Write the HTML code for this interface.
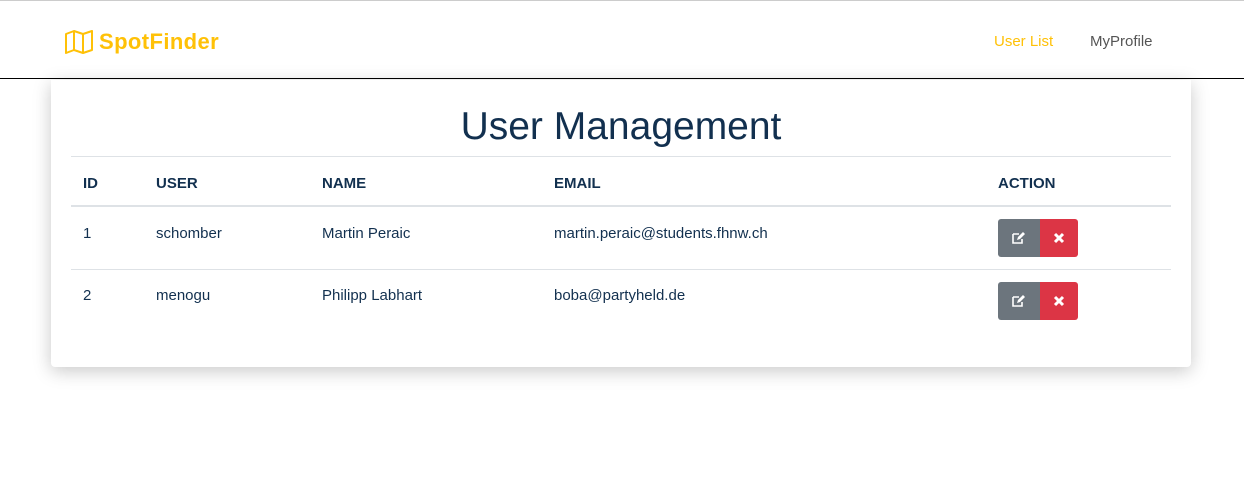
<!DOCTYPE html>
<html><head><style>
body{margin:0;width:1244px;height:485px;background:#fff;font-family:"Liberation Sans",sans-serif;color:#212529;overflow:hidden;position:relative}
.top{position:absolute;left:0;top:0;width:1244px;height:1px;background:#ccc}
.nav{position:absolute;left:0;top:1px;width:1244px;height:77px;border-bottom:1px solid #000}
.brand{position:absolute;left:65px;top:28px;color:#ffc107;font-weight:bold;font-size:22px;display:flex;align-items:center;gap:6px;letter-spacing:0.4px}
.nl{position:absolute;top:32px;font-size:15px}
.card{position:absolute;left:51px;top:80px;width:1140px;height:287px;background:#fff;border-radius:0 0 4px 4px;box-shadow:0 4px 18px rgba(0,0,0,.22)}
h1{position:absolute;left:0;width:1140px;top:24px;margin:0;text-align:center;font-weight:normal;font-size:39px;color:#12304f;line-height:46px}
.hl{position:absolute;left:20px;width:1100px;height:1px;background:#dee2e6}
.c{position:absolute;font-size:15px;color:#12304f}
.h{font-weight:bold;font-size:15px}
.b{position:absolute;width:42px;height:38px}
</style></head><body>
<div class="top"></div>
<div class="nav">
<div class="brand"><svg width="28" height="24" viewBox="0 0 28 24" fill="none" stroke="#ffc107" stroke-width="2" stroke-linejoin="round"><path d="M1 4L9 1L18 4L27 1V20L18 23L9 20L1 23Z M9 1V20 M18 4V23"/></svg>SpotFinder</div>
<div class="nl" style="left:994px;color:#ffc107">User List</div>
<div class="nl" style="left:1090px;color:#555">MyProfile</div>
</div>
<div class="card">
<h1>User Management</h1>
<div class="hl" style="top:76px"></div>
<div class="c h" style="left:32px;top:95px">ID</div>
<div class="c h" style="left:105px;top:95px">USER</div>
<div class="c h" style="left:271px;top:95px">NAME</div>
<div class="c h" style="left:503px;top:95px">EMAIL</div>
<div class="c h" style="left:947px;top:95px">ACTION</div>
<div class="hl" style="top:125px;height:2px"></div>
<div class="c" style="left:32px;top:145px">1</div>
<div class="c" style="left:105px;top:145px">schomber</div>
<div class="c" style="left:271px;top:145px">Martin Peraic</div>
<div class="c" style="left:503px;top:145px">martin.peraic@students.fhnw.ch</div>
<div class="hl" style="top:189px"></div>
<div class="c" style="left:32px;top:207px">2</div>
<div class="c" style="left:105px;top:207px">menogu</div>
<div class="c" style="left:271px;top:207px">Philipp Labhart</div>
<div class="c" style="left:503px;top:207px">boba@partyheld.de</div>
</div>
<div class="b" style="left:998px;top:219px;background:#6c757d;border-radius:3px 0 0 3px"><svg width="42" height="38"><path d="M15 15h6M15 15v9h9v-4" stroke="#fff" stroke-width="1.6" fill="none"/><path d="M19 21l1-3 5-5 2 2-5 5z" fill="#fff"/></svg></div>
<div class="b" style="left:1040px;top:219px;width:38px;background:#dc3545;border-radius:0 3px 3px 0"><svg width="38" height="38"><path d="M15 15l8 8M23 15l-8 8" stroke="#fff" stroke-width="3"/></svg></div>
<div class="b" style="left:998px;top:282px;background:#6c757d;border-radius:3px 0 0 3px"><svg width="42" height="38"><path d="M15 15h6M15 15v9h9v-4" stroke="#fff" stroke-width="1.6" fill="none"/><path d="M19 21l1-3 5-5 2 2-5 5z" fill="#fff"/></svg></div>
<div class="b" style="left:1040px;top:282px;width:38px;background:#dc3545;border-radius:0 3px 3px 0"><svg width="38" height="38"><path d="M15 15l8 8M23 15l-8 8" stroke="#fff" stroke-width="3"/></svg></div>
</body></html>
